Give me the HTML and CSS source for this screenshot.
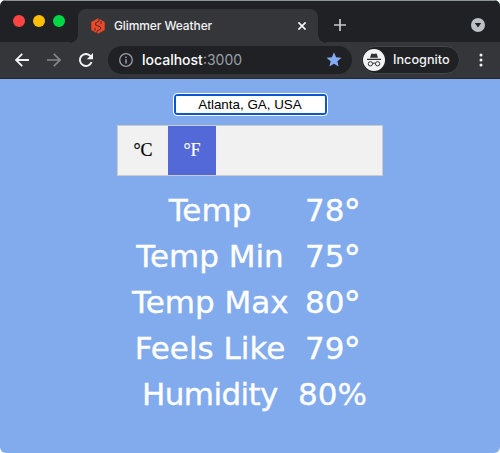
FILE: index.html
```html
<!DOCTYPE html>
<html lang="en">
<head>
<meta charset="utf-8">
<title>Glimmer Weather</title>
<link rel="stylesheet" href="styles.css">
</head>
<body>
<div class="window">
  <header class="tabbar">
    <div class="lights"><i class="red"></i><i class="yellow"></i><i class="green"></i></div>
    <div class="tab">
      <svg class="favicon" width="14" height="16" viewBox="0 0 14 16"><path fill="#f34624" d="M7 .3 13.7 4v8L7 15.7.3 12V4z"/><path fill="none" stroke="#35363a" stroke-width="1" d="M8 0v3L4.6 5v2l5 2v2L6 13v3M10 3.2v3M4 9.8v3"/></svg>
      <span class="title">Glimmer Weather</span>
      <svg class="close" width="8" height="8" viewBox="0 0 8 8"><path d="m.4.4 7.2 7.2m0-7.2L.4 7.6" stroke="#f1f3f4" stroke-width="1.7"/></svg>
    </div>
    <svg class="plus" width="12" height="12" viewBox="0 0 12 12"><path d="M6 0v12M0 6h12" stroke="#c5c9cc" stroke-width="1.7"/></svg>
    <svg class="down" width="14" height="14" viewBox="0 0 14 14"><circle cx="7" cy="7" r="7" fill="#bdc1c6"/><path d="M3.8 5h6.4L7 9.5z" fill="#202124"/></svg>
  </header>
  <div class="toolbar">
    <svg class="back" width="14" height="14" viewBox="0 0 14 14"><path d="M14 7H1.3M7.2.8 1 7l6.2 6.2" fill="none" stroke="#f1f3f4" stroke-width="1.8"/></svg>
    <svg class="forward" width="14" height="14" viewBox="0 0 14 14"><path d="M0 7h12.7M6.8.8 13 7l-6.2 6.2" fill="none" stroke="#85878a" stroke-width="1.7"/></svg>
    <svg class="reload" width="14" height="14" viewBox="0 0 14 14"><path d="M12.6 9A6 6 0 1 1 11.4 2.9L13 4.6" fill="none" stroke="#f1f3f4" stroke-width="1.9"/><path d="M14 0v6.2H7.8z" fill="#f1f3f4"/></svg>
    <div class="address">
      <svg width="14" height="14" viewBox="0 0 14 14"><circle cx="7" cy="7" r="6.3" fill="none" stroke="#9aa0a6" stroke-width="1.3"/><path d="M7 6.2v4.3M7 3.4v1.5" stroke="#9aa0a6" stroke-width="1.5"/></svg>
      <span class="url">localhost<span class="port">:3000</span></span>
      <svg class="star" width="16" height="15" viewBox="0 0 16 15"><path d="m8 .2 2.1 5 5.4.5-4.1 3.6 1.2 5.3L8 11.8l-4.6 2.8 1.2-5.3L.5 5.7l5.4-.5z" fill="#83abf3"/></svg>
    </div>
    <div class="incognito">
      <svg width="22" height="22" viewBox="0 0 22 22"><circle cx="11" cy="11" r="11" fill="#f1f3f4"/><path d="M7 8.8l1.2-3.9q.2-.6.8-.5l2 .5 2-.5q.6-.1.8.5L15 8.8z" fill="#303134"/><path d="M4 10.4h14" stroke="#303134" stroke-width="1.1"/><g fill="none" stroke="#303134" stroke-width="1"><rect x="5.3" y="12.7" width="4.2" height="4.2" rx="1.9"/><rect x="12.5" y="12.7" width="4.2" height="4.2" rx="1.9"/><path d="M9.5 14.4q1.5-.8 3 0"/></g></svg>
      <span>Incognito</span>
    </div>
    <svg class="menu" width="4" height="14" viewBox="0 0 4 14" fill="#f1f3f4"><circle cx="2" cy="2" r="1.5"/><circle cx="2" cy="7" r="1.5"/><circle cx="2" cy="12" r="1.5"/></svg>
  </div>
  <main class="page">
    <input class="city" type="text" value="Atlanta, GA, USA" aria-label="City">
    <div class="units"><span class="unit">°C</span><span class="unit active">°F</span></div>
    <div class="readings">
      <span class="name">Temp</span><span class="value">78<span class="degree">°</span></span>
      <span class="name">Temp Min</span><span class="value">75<span class="degree">°</span></span>
      <span class="name">Temp Max</span><span class="value">80<span class="degree">°</span></span>
      <span class="name">Feels Like</span><span class="value">79<span class="degree">°</span></span>
      <span class="name humidity">Humidity</span><span class="value">80%</span>
    </div>
  </main>
</div>
</body>
</html>
```

FILE: styles.css
```css
* { box-sizing: border-box; }
html { background: #fff; }
body { margin: 0; }
svg { display: block; flex: none; }
.window {
  width: 500px;
  height: 453px;
  overflow: hidden;
  border-radius: 6px;
  background: #82abee;
  font-family: Inter, "Liberation Sans", sans-serif;
}
.tabbar {
  display: flex;
  height: 42px;
  padding-top: 8px;
  border-top: 1px solid #8d9495;
  background: #202124;
}
.lights { display: flex; gap: 8px; padding: 6px 0 0 13px; width: 78px; }
.lights i { width: 12px; height: 12px; border-radius: 50%; }
.red { background: #ff4543; }
.yellow { background: #ffbd05; }
.green { background: #00d746; }
.tab {
  position: relative;
  display: flex;
  align-items: center;
  width: 240px;
  height: 34px;
  padding: 0 12px 1px 13px;
  border-radius: 8px 8px 0 0;
  background: #35363a;
}
.tab::before, .tab::after {
  content: "";
  position: absolute;
  bottom: 0;
  width: 8px;
  height: 8px;
}
.tab::before { left: -8px; background: radial-gradient(circle at 0 0, #202124 7.5px, #35363a 8px); }
.tab::after { right: -8px; background: radial-gradient(circle at 100% 0, #202124 7.5px, #35363a 8px); }
.title {
  margin-left: 9px;
  color: #f1f3f4;
  font-size: 12px;
  font-weight: 500;
  letter-spacing: -0.1px;
  white-space: nowrap;
}
.close { margin-left: auto; }
.plus { margin: 10px 0 0 16px; }
.down { margin: 9px 15px 0 auto; }
.toolbar {
  display: flex;
  align-items: center;
  height: 37px;
  padding: 0 17px 1px 15px;
  border-bottom: 1px solid #292a2d;
  background: #35363a;
}
.forward { margin-left: 18px; }
.reload { margin-left: 18px; }
.address {
  display: flex;
  align-items: center;
  width: 244px;
  height: 28px;
  margin-left: 15px;
  padding: 0 10px 0 11px;
  border-radius: 14px;
  background: #202124;
}
.url { margin-left: 9px; color: #fff; font-size: 14px; font-weight: 500; }
.port { color: #9aa0a6; font-weight: 400; }
.star { margin-left: auto; }
.incognito {
  display: flex;
  align-items: center;
  gap: 8px;
  width: 99px;
  height: 28px;
  margin-left: 9px;
  padding-left: 1px;
  border: 1px solid #434448;
  border-radius: 14px;
  background: #202124;
  color: #f1f3f4;
  font-size: 12.7px;
  font-weight: 500;
}
.menu { margin-left: auto; }
.page { display: flex; flex-direction: column; align-items: center; padding-top: 15px; }
.city {
  width: 153px;
  height: 21px;
  margin: 0;
  padding: 0 2px;
  border: 2px solid #0b57d0;
  border-radius: 3px;
  outline: 1px solid #fff;
  background: #fff;
  color: #000;
  font: 13.4px "Liberation Sans", sans-serif;
  text-align: center;
}
.units {
  display: flex;
  width: 266px;
  height: 51px;
  margin-top: 10px;
  border: 1px solid #ccc;
  background: #f1f1f1;
}
.unit {
  width: 50px;
  padding-top: 14px;
  font: 18px/20px "Liberation Serif", serif;
  text-align: center;
  -webkit-text-stroke: 0.2px currentColor;
}
.unit.active { width: 48px; background: #5269d7; color: #fff; }
.readings {
  display: grid;
  grid-template-columns: 156px 71px;
  grid-auto-rows: 46px;
  column-gap: 9px;
  margin-top: 11px;
  color: #fff;
  font: 31px/46px "DejaVu Sans", sans-serif;
  -webkit-text-stroke: 0.35px currentColor;
  text-align: center;
  white-space: nowrap;
}
.humidity { letter-spacing: -0.6px; }
.degree { margin: 0 -1px; font-size: 35px; line-height: 1; vertical-align: -3px; }
```
